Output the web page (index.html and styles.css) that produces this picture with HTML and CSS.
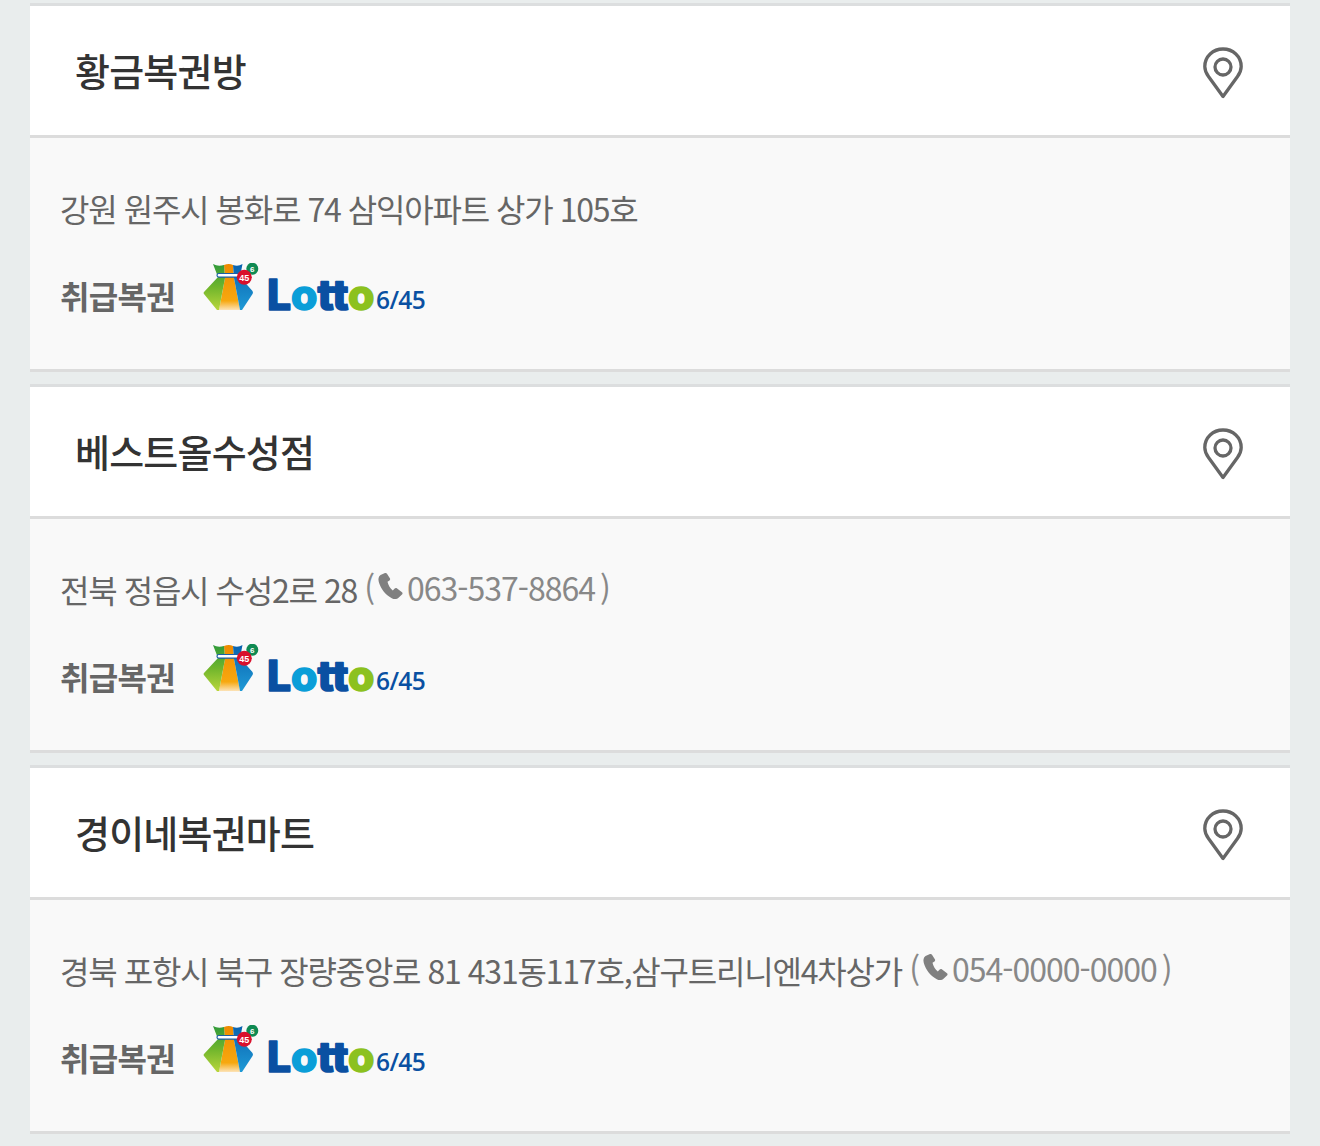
FILE: index.html

```html
<!DOCTYPE html>
<html lang="ko">
<head>
    <meta charset="UTF-8">
    <meta name="viewport" content="width=device-width, initial-scale=1.0">
    <title>복권 판매점</title>
    <link rel="stylesheet" href="styles.css">
</head>
<body>
    <svg class="defs" width="0" height="0">
        <defs>
            <linearGradient id="fadeGreen" x1="0" y1="0" x2="0" y2="1">
                <stop offset="0" stop-color="#2f9a3a"/><stop offset="0.5" stop-color="#6fb52c"/><stop offset="1" stop-color="#b9d63c"/>
            </linearGradient>
            <linearGradient id="fadeOrange" x1="0" y1="0" x2="0" y2="1">
                <stop offset="0" stop-color="#ee8a00"/><stop offset="0.8" stop-color="#f7a80f"/><stop offset="1" stop-color="#fce3b8"/>
            </linearGradient>
            <linearGradient id="fadeBlue" x1="0" y1="0" x2="0" y2="1">
                <stop offset="0" stop-color="#0a62ae"/><stop offset="1" stop-color="#1f9ad6"/>
            </linearGradient>
            <symbol id="pin" viewBox="0 0 40 52">
                <path d="M20 49.500 L5.500 29.500 C2.800 25.800 1.800 23 1.800 19.500 C1.800 9.500 10 2 20 2 C30 2 38.200 9.500 38.200 19.500 C38.200 23 37.200 25.800 34.500 29.500 Z" fill="none" stroke="#666" stroke-width="3.300" stroke-linejoin="round"/>
                <circle cx="20" cy="20" r="8" fill="none" stroke="#666" stroke-width="3.300"/>
            </symbol>
            <symbol id="phone" viewBox="0 0 25 28">
                <path d="M7 1 L2.500 3 C0.500 4.500 0 7 0.800 10 C2.800 17 7.500 22.800 13.800 26.200 C16.500 27.600 19 27.200 20.800 25.500 L24 22.500 C24.800 21.800 24.700 20.800 24 20.200 L18.800 16.300 C18.100 15.800 17.300 15.900 16.700 16.500 L14.800 18.500 C12.300 16.800 10.300 13.300 9.500 9.800 L11.500 8.500 C12.100 8.100 12.300 7.300 12 6.600 L9 1.700 C8.600 1 7.800 0.700 7 1 Z" fill="#808080"/>
            </symbol>
            <symbol id="lotto" viewBox="0 0 222 50" overflow="visible">
                <path d="M21 2 Q26 0 30 2 L31 15 L37 47 L16 47 L22 15 Z" fill="url(#fadeOrange)"/>
                <path d="M10 1 Q15 4 21 2 L22 15 L16 47 L14 47 L1 31 Q0 30 1 29 L15 14 Z" fill="url(#fadeGreen)"/>
                <path d="M30 2 Q35 4 39.500 1 L37 14 L49.500 28 Q50.500 30 49.500 31 L39 47 L37 47 L31 15 Z" fill="url(#fadeBlue)"/>
                <rect x="14" y="10.500" width="22" height="3.600" rx="1.800" fill="#fff" stroke="#1a5fa8" stroke-width="1.200"/>
                <circle cx="49.300" cy="5.700" r="6" fill="#0f8a52"/>
                <text class="logo-ball" x="49.300" y="8.700" font-size="8">6</text>
                <circle cx="41.300" cy="14.300" r="7.500" fill="#d9102c"/>
                <text class="logo-ball" x="41.300" y="17.600" font-size="9">45</text>
                <text class="logo-word" x="64" y="46.500" font-size="42" textLength="107.500" lengthAdjust="spacingAndGlyphs"><tspan class="ink-blue">L</tspan><tspan class="ink-sky">o</tspan><tspan class="ink-blue">tt</tspan><tspan class="ink-green">o</tspan></text>
                <text class="logo-num" x="173" y="45.500" font-size="24.500">6/45</text>
            </symbol>
        </defs>
    </svg>

    <div class="store">
        <div class="store-head">
            <h2 class="store-name">황금복권방</h2>
            <svg class="pin-icon"><use href="#pin"/></svg>
        </div>
        <div class="store-body">
            <p class="address">강원 원주시 봉화로 74 삼익아파트 상가 105호</p>
            <div class="games">
                <span class="games-label">취급복권</span>
                <svg class="lotto-logo"><use href="#lotto"/></svg>
            </div>
        </div>
    </div>

    <div class="store">
        <div class="store-head">
            <h2 class="store-name">베스트올수성점</h2>
            <svg class="pin-icon"><use href="#pin"/></svg>
        </div>
        <div class="store-body">
            <p class="address">전북 정읍시 수성2로 28 <span class="tel">(<svg class="phone-icon"><use href="#phone"/></svg>063-537-8864 )</span></p>
            <div class="games">
                <span class="games-label">취급복권</span>
                <svg class="lotto-logo"><use href="#lotto"/></svg>
            </div>
        </div>
    </div>

    <div class="store">
        <div class="store-head">
            <h2 class="store-name">경이네복권마트</h2>
            <svg class="pin-icon"><use href="#pin"/></svg>
        </div>
        <div class="store-body">
            <p class="address">경북 포항시 북구 장량중앙로 81 431동117호,삼구트리니엔4차상가 <span class="tel">(<svg class="phone-icon"><use href="#phone"/></svg>054-0000-0000 )</span></p>
            <div class="games">
                <span class="games-label">취급복권</span>
                <svg class="lotto-logo"><use href="#lotto"/></svg>
            </div>
        </div>
    </div>
</body>
</html>
```

FILE: styles.css

```css
html, body {
    height: 1146px;
    overflow: hidden;
}
body {
    margin: 0;
    padding: 3px 30px 0;
    background-color: #e9eded;
    font-family: "Noto Sans CJK KR", "Noto Sans", sans-serif;
}
.defs {
    position: absolute;
}
.store {
    margin-bottom: 12px;
    border-top: 3px solid #dcdedf;
    border-bottom: 3px solid #dcdcdc;
    background-color: #f9f9f9;
}
.store-head {
    display: flex;
    justify-content: space-between;
    align-items: center;
    height: 129px;
    padding: 0 47px 0 45px;
    background-color: #fff;
    border-bottom: 3px solid #dcdcdc;
}
.store-name {
    margin: 0 0 2px;
    font-size: 38px;
    font-weight: 500;
    letter-spacing: -0.800px;
    color: #333;
}
.pin-icon {
    width: 40px;
    height: 52px;
    margin-top: 5px;
}
.store-body {
    height: 231px;
    padding: 0 30px;
    box-sizing: border-box;
}
.address {
    margin: 0;
    padding-top: 44px;
    height: 53px;
    line-height: 53px;
    font-size: 32px;
    letter-spacing: -1.200px;
    word-spacing: -0.600px;
    color: #666;
    white-space: nowrap;
}
.tel {
    color: #888;
    letter-spacing: -1px;
    word-spacing: -3px;
    line-height: 32px;
    vertical-align: 2px;
}
.phone-icon {
    width: 25px;
    height: 28px;
    margin: 0 4px;
    vertical-align: 1px;
}
.games {
    display: flex;
    align-items: flex-start;
    margin-top: 28px;
}
.games-label {
    font-size: 32px;
    font-weight: 700;
    letter-spacing: -0.700px;
    line-height: 64px;
    color: #666;
}
.lotto-logo {
    width: 222px;
    height: 50px;
    margin-left: 28px;
}
.logo-ball {
    font-family: "Liberation Sans", sans-serif;
    font-weight: 700;
    fill: #fff;
    text-anchor: middle;
}
.logo-word {
    font-family: Inter, sans-serif;
    font-weight: 800;
    stroke-width: 1.500px;
    stroke-linejoin: round;
}
.ink-blue {
    fill: #0a50a2;
    stroke: #0a50a2;
}
.ink-sky {
    fill: #0a9ed8;
    stroke: #0a9ed8;
}
.ink-green {
    fill: #8cc11f;
    stroke: #8cc11f;
}
.logo-num {
    font-family: "Open Sans", sans-serif;
    font-weight: 600;
    fill: #0a50a2;
    letter-spacing: -0.600px;
}
```
